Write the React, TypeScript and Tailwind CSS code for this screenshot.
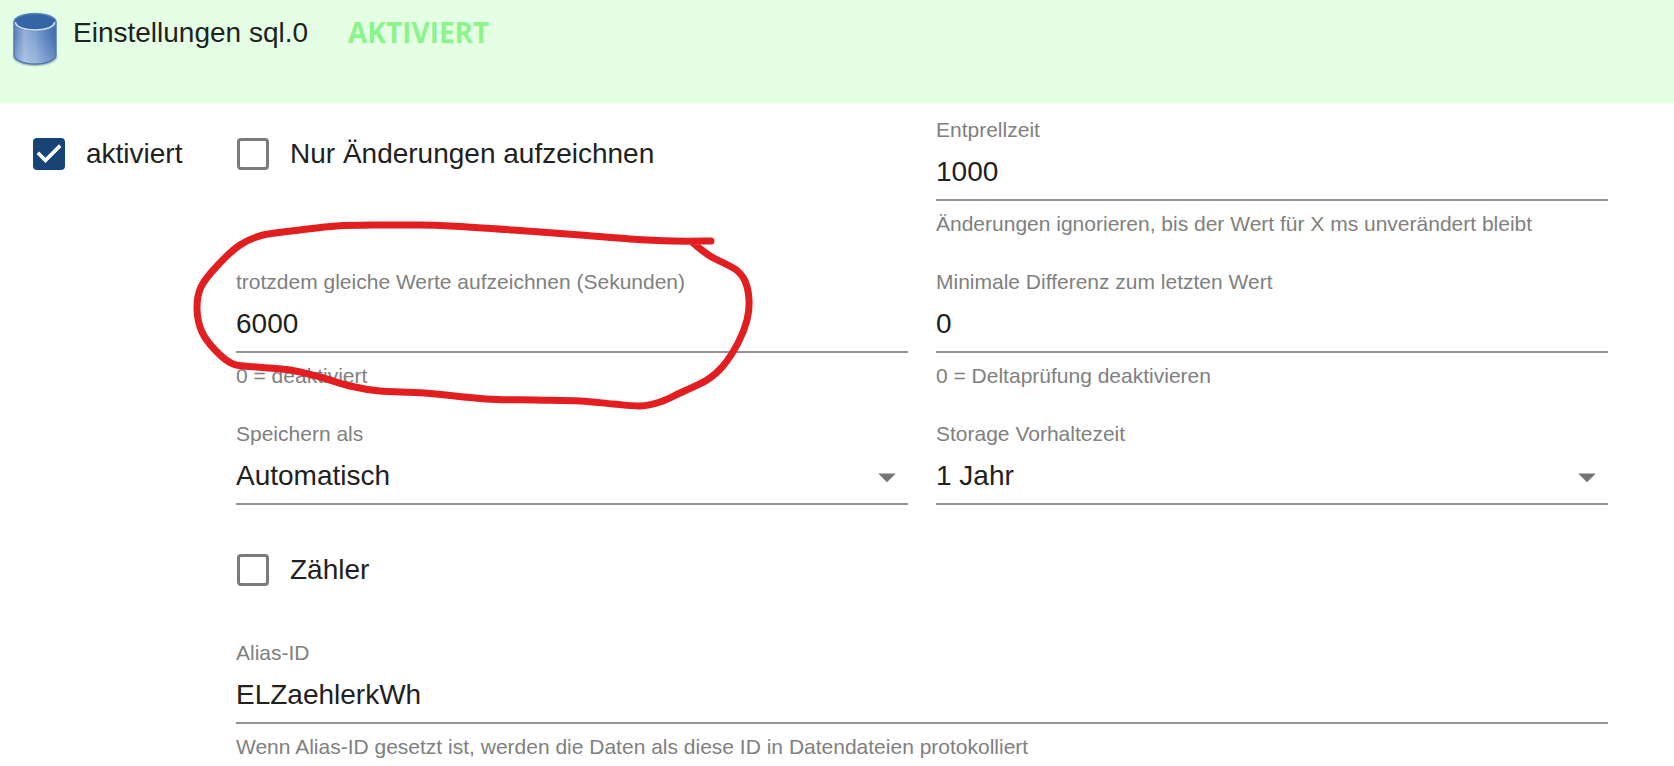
import { useId, useState, type ReactNode } from "react";

// Marker stroke, in page pixels
const markerPoints = [
  [711, 241], [673, 241], [630, 239], [580, 235], [513, 230], [450, 226],
  [415, 225], [380, 225], [337, 226], [300, 230], [263, 235], [240, 245],
  [217, 266], [201, 287], [197, 309], [202, 332], [216, 351], [233, 364],
  [257, 367], [290, 370], [320, 377], [350, 386], [380, 391], [425, 393],
  [486, 399], [535, 400], [580, 401], [613, 404], [640, 406], [660, 402],
  [680, 393], [707, 380], [723, 366], [738, 343], [747, 320], [749, 300],
  [745, 281], [735, 269], [710, 256], [693, 243],
];

// Smooth curve through all points (Catmull-Rom as cubic segments)
function smoothPath(points: number[][]) {
  let d = `M${points[0][0]} ${points[0][1]}`;
  for (let i = 0; i < points.length - 1; i++) {
    const p0 = points[i - 1] ?? points[i];
    const p1 = points[i];
    const p2 = points[i + 1];
    const p3 = points[i + 2] ?? p2;
    d += `C${p1[0] + (p2[0] - p0[0]) / 6} ${p1[1] + (p2[1] - p0[1]) / 6} `;
    d += `${p2[0] - (p3[0] - p1[0]) / 6} ${p2[1] - (p3[1] - p1[1]) / 6} ${p2[0]} ${p2[1]}`;
  }
  return d;
}

function DatabaseIcon() {
  return (
    <svg viewBox="0 0 48 58" className="h-[58px] w-12 shrink-0" aria-hidden="true">
      <defs>
        <linearGradient id="db-body" x1="0" x2="1" y1="0" y2="0">
          <stop offset="0" stopColor="#5480bc" />
          <stop offset="0.25" stopColor="#94b1d9" />
          <stop offset="0.5" stopColor="#7fa2d0" />
          <stop offset="0.75" stopColor="#5a85c0" />
          <stop offset="1" stopColor="#3f6cab" />
        </linearGradient>
        <linearGradient id="db-shine" x1="0" x2="0" y1="0" y2="1">
          <stop offset="0.3" stopColor="#ffffff" stopOpacity="0" />
          <stop offset="1" stopColor="#ffffff" stopOpacity="0.25" />
        </linearGradient>
        <radialGradient id="db-shadow">
          <stop offset="0.75" stopColor="#4a6a80" stopOpacity="0.6" />
          <stop offset="1" stopColor="#4a6a80" stopOpacity="0" />
        </radialGradient>
      </defs>
      <ellipse cx="24" cy="46" rx="24" ry="10" fill="url(#db-shadow)" />
      <path d="M3 12v32c0 5 9 9 21 9s21-4 21-9V12z" fill="url(#db-body)" />
      <path
        d="M3 12v32c0 5 9 9 21 9s21-4 21-9V12z"
        fill="url(#db-shine)"
        stroke="#4f78ae"
        strokeWidth="1.5"
      />
      <ellipse cx="24" cy="11" rx="21" ry="8.5" fill="#3465a4" stroke="#5b84b8" strokeWidth="1.5" />
      <path
        d="M4.5 11c0 5 9 8 19.500 8s19.500-3 19.500-8"
        fill="none"
        stroke="#d3e3f5"
        strokeWidth="1.5"
      />
    </svg>
  );
}

function Checkbox({
  label,
  checked = false,
  className = "",
}: {
  label: string;
  checked?: boolean;
  className?: string;
}) {
  const [on, setOn] = useState(checked);

  return (
    <label className={`flex items-center gap-[21px] text-[28px] ${className}`}>
      <span className="relative flex size-8 shrink-0">
        <input
          type="checkbox"
          checked={on}
          onChange={(e) => setOn(e.target.checked)}
          className="peer size-8 appearance-none rounded-[4px] border-[3px] border-[#7b7b7b] checked:border-[#164477] checked:bg-[#164477]"
        />
        <svg
          viewBox="3 3 18 18"
          className="pointer-events-none absolute inset-0 hidden size-8 fill-white peer-checked:block"
          aria-hidden="true"
        >
          <path d="M10 17l-5-5 1.410-1.410L10 14.170l7.590-7.590L19 8z" />
        </svg>
      </span>
      {label}
    </label>
  );
}

function Field({
  id,
  label,
  helper,
  className = "",
  children,
}: {
  id: string;
  label: string;
  helper?: string;
  className?: string;
  children: ReactNode;
}) {
  return (
    <div className={className}>
      <label htmlFor={id} className="block text-[21px] leading-7 text-[#808080]">
        {label}
      </label>
      <div className="relative border-b-2 border-[#949494]">{children}</div>
      {helper && <p className="mt-[9px] text-[21px] leading-7 text-[#808080]">{helper}</p>}
    </div>
  );
}

function TextField({
  label,
  value,
  helper,
  className,
}: {
  label: string;
  value: string;
  helper?: string;
  className?: string;
}) {
  const id = useId();

  return (
    <Field id={id} label={label} helper={helper} className={className}>
      <input
        id={id}
        type="text"
        defaultValue={value}
        className="block h-[55px] w-full bg-transparent text-[28px] outline-none"
      />
    </Field>
  );
}

function SelectField({ label, options }: { label: string; options: string[] }) {
  const id = useId();

  return (
    <Field id={id} label={label}>
      <select id={id} className="block h-[55px] w-full appearance-none bg-transparent text-[28px] outline-none">
        {options.map((option) => (
          <option key={option}>{option}</option>
        ))}
      </select>
      <svg
        viewBox="0 0 24 24"
        className="pointer-events-none absolute top-2 right-0 size-[42px] fill-[#757575]"
        aria-hidden="true"
      >
        <path d="M7 10l5 5 5-5z" />
      </svg>
    </Field>
  );
}

// Hand-drawn loop around the "same values" field
function MarkerCircle() {
  return (
    <svg
      viewBox="192 218 564 198"
      className="pointer-events-none absolute -top-[50px] -left-[44px] z-10 h-[198px] w-[564px]"
      fill="none"
      stroke="#e31e20"
      strokeWidth="7"
      strokeLinecap="round"
      strokeLinejoin="round"
      aria-hidden="true"
    >
      <path d={smoothPath(markerPoints)} />
    </svg>
  );
}

export default function App() {
  return (
    <div className="min-h-screen bg-white font-['Liberation_Sans',Arial,sans-serif] text-[#212121]">
      <header className="flex h-[103px] items-start bg-[#e5ffe5] pt-[11px] pl-[11px]">
        <DatabaseIcon />
        <h1 className="ml-[14px] text-[28px] leading-[44px]">Einstellungen sql.0</h1>
        <span className="ml-10 font-['Open_Sans',sans-serif] text-[28px] leading-[42px] font-bold text-[#8af58a]">
          AKTIVIERT
        </span>
      </header>

      <main className="flex pt-[13px] pr-[66px] pl-[33px]">
        <div className="w-[203px] shrink-0">
          <Checkbox label="aktiviert" checked className="h-[76px]" />
        </div>

        <div className="grid flex-1 grid-cols-2 gap-x-7 gap-y-[30px]">
          <Checkbox label="Nur Änderungen aufzeichnen" className="h-[76px] pl-px" />
          <TextField
            label="Entprellzeit"
            value="1000"
            helper="Änderungen ignorieren, bis der Wert für X ms unverändert bleibt"
          />

          <div className="relative">
            <TextField
              label="trotzdem gleiche Werte aufzeichnen (Sekunden)"
              value="6000"
              helper="0 = deaktiviert"
            />
            <MarkerCircle />
          </div>
          <TextField
            label="Minimale Differenz zum letzten Wert"
            value="0"
            helper="0 = Deltaprüfung deaktivieren"
          />

          <SelectField label="Speichern als" options={["Automatisch", "Zahl", "Zeichenkette", "Logikwert"]} />
          <SelectField label="Storage Vorhaltezeit" options={["1 Jahr", "2 Jahre", "6 Monate", "1 Monat"]} />

          <Checkbox label="Zähler" className="col-span-2 mb-1 h-[70px] pl-px" />

          <TextField
            label="Alias-ID"
            value="ELZaehlerkWh"
            helper="Wenn Alias-ID gesetzt ist, werden die Daten als diese ID in Datendateien protokolliert"
            className="col-span-2"
          />
        </div>
      </main>
    </div>
  );
}
